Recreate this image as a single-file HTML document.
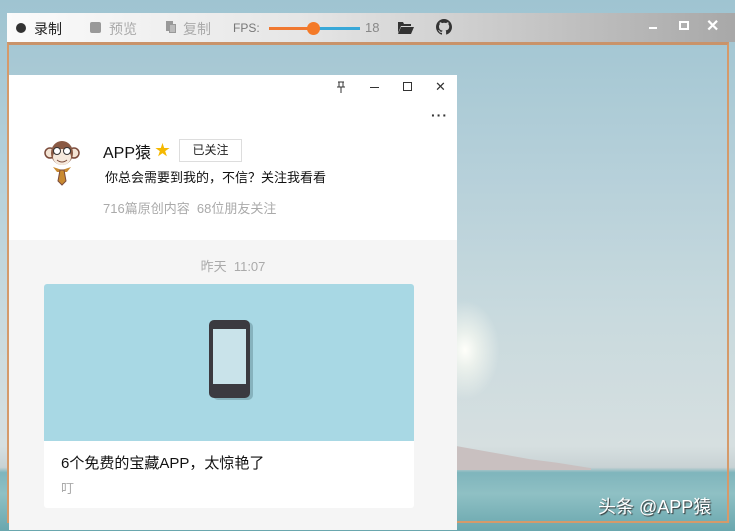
<!DOCTYPE html>
<html><head><meta charset="utf-8"><style>
*{margin:0;padding:0;box-sizing:border-box}
body{width:735px;height:531px;overflow:hidden;position:relative;font-family:"Liberation Sans","Noto Sans CJK SC",sans-serif;
background:linear-gradient(180deg,#9fc4d1 0%,#b4cfd9 30%,#c9dade 60%,#d6dfe0 84%,#c8d2d4 88%,#7fb5bc 89%,#8fc0c4 93%,#6aa7ae 100%);}
.sun{position:absolute;left:430px;top:300px;width:70px;height:100px;border-radius:50%;background:radial-gradient(ellipse at center,rgba(255,255,250,1) 0%,rgba(255,255,245,.6) 25%,rgba(255,255,255,0) 70%)}
.hill{position:absolute;left:456px;top:446px;width:135px;height:24px;background:#c9c0c0;clip-path:polygon(0 0,25% 25%,55% 55%,75% 70%,100% 92%,100% 100%,0 100%)}
.bar{position:absolute;left:7px;top:13px;width:728px;height:29px;background:linear-gradient(90deg,#fbfbfb 0%,#e6e6e6 40%,#c8c8c8 70%,#a8a8a8 100%);font-size:14px;color:#222}
.frame{position:absolute;left:7px;top:42px;width:722px;height:481px;border:2px solid #d59a6a;border-top:3px solid #c9936a}
.win{position:absolute;left:9px;top:75px;width:448px;height:455px;background:#f5f5f5}
.top{position:absolute;left:0;top:0;width:448px;height:165px;background:#fff}
.g{color:#aaa}
</style></head><body>
<div class="sun"></div><div class="hill"></div>
<div class="bar">
 <div style="position:absolute;left:9px;top:10px;width:10px;height:10px;border-radius:50%;background:#333"></div>
 <div style="position:absolute;left:27px;top:6px">录制</div>
 <div style="position:absolute;left:83px;top:9px;width:11px;height:11px;background:#999;border-radius:2px"></div>
 <div style="position:absolute;left:102px;top:6px;color:#aaa">预览</div>
 <div style="position:absolute;left:159px;top:8px;width:7px;height:10px;background:#999"></div>
 <div style="position:absolute;left:162px;top:11px;width:7px;height:9px;background:#bbb;border:1px solid #999"></div>
 <div style="position:absolute;left:176px;top:6px;color:#aaa">复制</div>
 <div style="position:absolute;left:226px;top:8px;font-size:12px;color:#777">FPS:</div>
 <div style="position:absolute;left:262px;top:14px;width:45px;height:3px;background:#f07830"></div>
 <div style="position:absolute;left:307px;top:14px;width:46px;height:3px;background:#38a8d8"></div>
 <div style="position:absolute;left:300px;top:9px;width:13px;height:13px;border-radius:50%;background:#f47a28"></div>
 <div style="position:absolute;left:358px;top:7px;font-size:13px;color:#888">18</div>
 <svg style="position:absolute;left:391px;top:8px" width="16" height="13" viewBox="0 0 16 13"><path d="M0 1h5l1 2h7v2H3L0 12z" fill="#333"/><path d="M3 6h13l-3 7H0z" fill="#333"/></svg>
 <svg style="position:absolute;left:429px;top:6px" width="16" height="16" viewBox="0 0 16 16"><path fill="#333" d="M8 0C3.6 0 0 3.6 0 8c0 3.5 2.3 6.5 5.5 7.6.4.1.5-.2.5-.4v-1.4c-2.200.5-2.7-1-2.7-1-.4-.9-.9-1.2-.9-1.2-.7-.5.1-.5.1-.5.8.1 1.2.8 1.2.8.7 1.3 1.9.9 2.4.7.1-.5.3-.9.5-1.1-1.8-.2-3.6-.9-3.6-4 0-.9.3-1.6.8-2.1-.1-.2-.4-1 .1-2.1 0 0 .7-.2 2.2.8.6-.2 1.3-.3 2-.3s1.4.1 2 .3c1.5-1 2.2-.8 2.2-.8.4 1.1.2 1.9.1 2.1.5.6.8 1.3.8 2.100 0 3.1-1.9 3.7-3.6 3.9.3.3.5.8.5 1.5v2.2c0 .2.1.5.6.4C13.7 14.5 16 11.5 16 8c0-4.4-3.6-8-8-8z"/></svg>
 <div style="position:absolute;left:642px;top:14px;width:8px;height:2px;background:#fff"></div>
 <div style="position:absolute;left:672px;top:8px;width:10px;height:9px;border:2px solid #fff"></div>
 <div style="position:absolute;left:699px;top:3px;color:#fff;font-size:16px;font-weight:bold">✕</div>
</div>
<div class="frame"></div>
<div class="win">
 <div class="top">
  <svg style="position:absolute;left:327px;top:6px" width="10" height="13" viewBox="0 0 10 13"><path d="M2 1h6M3 1v5M7 1v5M1 6h8M5 6v6" stroke="#333" fill="none"/></svg>
  <div style="position:absolute;left:361px;top:12px;width:9px;height:1px;background:#333"></div>
  <div style="position:absolute;left:394px;top:7px;width:9px;height:9px;border:1px solid #333"></div>
  <div style="position:absolute;left:426px;top:4px;font-size:13px;color:#333">✕</div>
  <div style="position:absolute;left:422px;top:32px;font-size:14px;color:#333;letter-spacing:1px;font-weight:bold">···</div>
  <svg style="position:absolute;left:35px;top:63px" width="36" height="50" viewBox="0 0 36 50">
   <circle cx="6" cy="15" r="5" fill="#f3e3d3" stroke="#7a4a3a" stroke-width="1.5"/><circle cx="30" cy="15" r="5" fill="#f3e3d3" stroke="#7a4a3a" stroke-width="1.5"/>
   <ellipse cx="18" cy="15" rx="11" ry="12" fill="#8a5a44"/><ellipse cx="18" cy="19" rx="9" ry="8" fill="#f6e9dc"/>
   <circle cx="13" cy="13" r="3.5" fill="#fff" stroke="#333"/><circle cx="23" cy="13" r="3.5" fill="#fff" stroke="#333"/>
   <path d="M13 22q5 4 10 0" stroke="#7a4a3a" fill="none"/>
   <path d="M9 29l9 3 9-3-4 5h-10z" fill="#c98a30"/><path d="M16 32h4l2 11-4 4-4-4z" fill="#c98a30" stroke="#7a4a3a"/>
  </svg>
  <div style="position:absolute;left:94px;top:64px;font-size:16px;color:#111">APP猿</div>
  <div style="position:absolute;left:146px;top:64px;font-size:15px;color:#f5b800">★</div>
  <div style="position:absolute;left:170px;top:64px;width:63px;height:23px;border:1px solid #ddd;font-size:12px;text-align:center;line-height:21px;color:#222">已关注</div>
  <div style="position:absolute;left:96px;top:92px;font-size:13px;color:#111">你总会需要到我的，不信？关注我看看</div>
  <div style="position:absolute;left:94px;top:123px;font-size:13px" class="g">716篇原创内容&nbsp;&nbsp;68位朋友关注</div>
 </div>
 <div style="position:absolute;left:0;top:181px;width:448px;text-align:center;font-size:13px;color:#aaa">昨天&nbsp;&nbsp;11:07</div>
 <div style="position:absolute;left:35px;top:209px;width:370px;height:224px;background:#fff;border-radius:3px;overflow:hidden">
  <div style="height:157px;background:#a8d8e4;position:relative">
   <div style="position:absolute;left:169px;top:38px;width:40px;height:78px;background:#6f9aa3;border-radius:5px;opacity:.6"></div>
   <div style="position:absolute;left:165px;top:36px;width:41px;height:78px;background:#3b3a40;border-radius:5px"></div>
   <div style="position:absolute;left:169px;top:45px;width:33px;height:55px;background:#c9e3ea"></div>
  </div>
  <div style="position:absolute;left:17px;top:168px;font-size:15px;color:#111">6个免费的宝藏APP，太惊艳了</div>
  <div style="position:absolute;left:17px;top:194px;font-size:13px;color:#aaa">叮</div>
 </div>
</div>
<div style="position:absolute;left:598px;top:493px;font-size:18px;color:#fff;text-shadow:1px 1px 1px #333">头条 @APP猿</div>
</body></html>
